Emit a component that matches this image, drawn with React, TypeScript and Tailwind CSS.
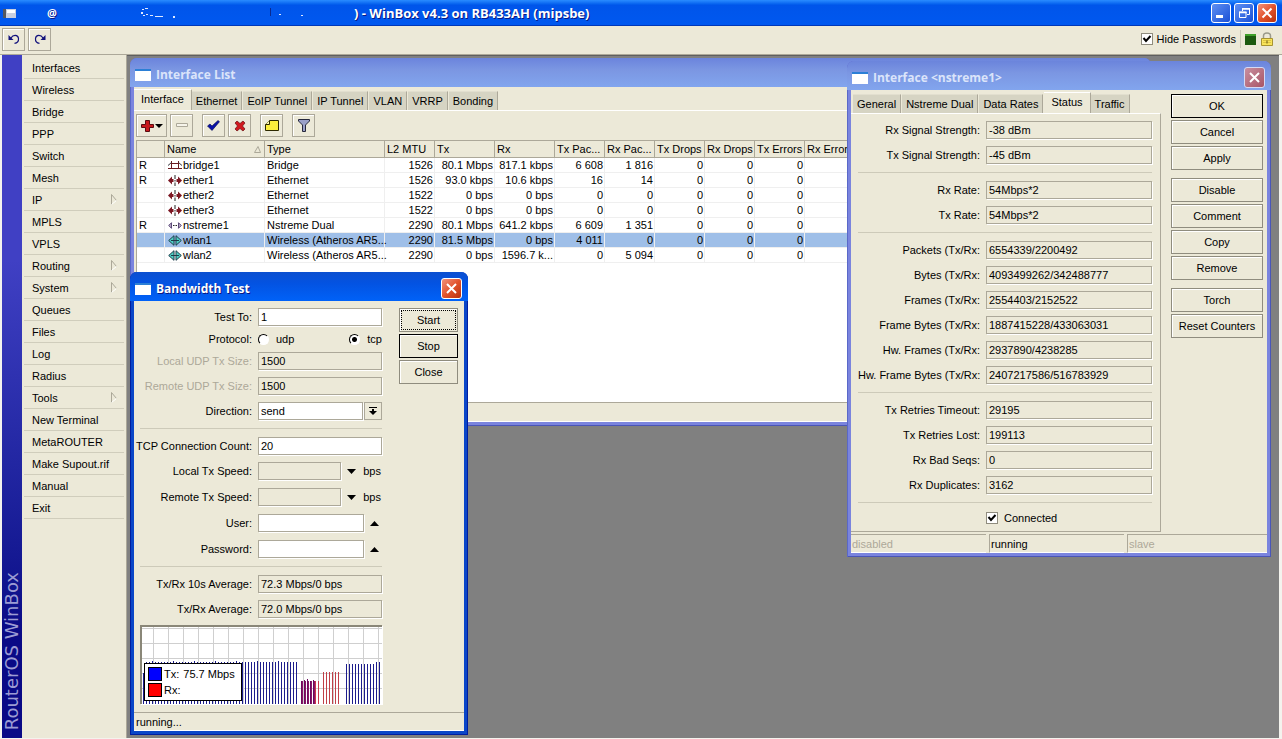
import { useState } from 'react';
import type { ReactNode } from 'react';

const menuItems = [
  { label: 'Interfaces' },
  { label: 'Wireless' },
  { label: 'Bridge' },
  { label: 'PPP' },
  { label: 'Switch' },
  { label: 'Mesh' },
  { label: 'IP', sub: true },
  { label: 'MPLS' },
  { label: 'VPLS' },
  { label: 'Routing', sub: true },
  { label: 'System', sub: true },
  { label: 'Queues' },
  { label: 'Files' },
  { label: 'Log' },
  { label: 'Radius' },
  { label: 'Tools', sub: true },
  { label: 'New Terminal' },
  { label: 'MetaROUTER' },
  { label: 'Make Supout.rif' },
  { label: 'Manual' },
  { label: 'Exit' },
];

const columns = [
  { label: '', width: 'w-[28px]' },
  { label: 'Name', width: 'w-[100px]', sorted: true },
  { label: 'Type', width: 'w-[120px]' },
  { label: 'L2 MTU', width: 'w-[50px]' },
  { label: 'Tx', width: 'w-[60px]' },
  { label: 'Rx', width: 'w-[60px]' },
  { label: 'Tx Pac...', width: 'w-[50px]' },
  { label: 'Rx Pac...', width: 'w-[50px]' },
  { label: 'Tx Drops', width: 'w-[50px]' },
  { label: 'Rx Drops', width: 'w-[50px]' },
  { label: 'Tx Errors', width: 'w-[50px]' },
  { label: 'Rx Errors', width: 'w-[50px]' },
];

const interfaces = [
  { flag: 'R', name: 'bridge1', kind: 'bridge', type: 'Bridge', values: ['1526', '80.1 Mbps', '817.1 kbps', '6 608', '1 816', '0', '0', '0', '0'] },
  { flag: 'R', name: 'ether1', kind: 'ether', type: 'Ethernet', values: ['1526', '93.0 kbps', '10.6 kbps', '16', '14', '0', '0', '0', '0'] },
  { flag: '', name: 'ether2', kind: 'ether', type: 'Ethernet', values: ['1522', '0 bps', '0 bps', '0', '0', '0', '0', '0', '0'] },
  { flag: '', name: 'ether3', kind: 'ether', type: 'Ethernet', values: ['1522', '0 bps', '0 bps', '0', '0', '0', '0', '0', '0'] },
  { flag: 'R', name: 'nstreme1', kind: 'nstreme', type: 'Nstreme Dual', values: ['2290', '80.1 Mbps', '641.2 kbps', '6 609', '1 351', '0', '0', '0', '0'] },
  { flag: '', name: 'wlan1', kind: 'wlan', type: 'Wireless (Atheros AR5...', values: ['2290', '81.5 Mbps', '0 bps', '4 011', '0', '0', '0', '0', '0'] },
  { flag: '', name: 'wlan2', kind: 'wlan', type: 'Wireless (Atheros AR5...', values: ['2290', '0 bps', '1596.7 k...', '0', '5 094', '0', '0', '0', '0'] },
];

const statusGroups = [
  [
    ['Rx Signal Strength:', '-38 dBm'],
    ['Tx Signal Strength:', '-45 dBm'],
  ],
  [
    ['Rx Rate:', '54Mbps*2'],
    ['Tx Rate:', '54Mbps*2'],
  ],
  [
    ['Packets (Tx/Rx:', '6554339/2200492'],
    ['Bytes (Tx/Rx:', '4093499262/342488777'],
    ['Frames (Tx/Rx:', '2554403/2152522'],
    ['Frame Bytes (Tx/Rx:', '1887415228/433063031'],
    ['Hw. Frames (Tx/Rx:', '2937890/4238285'],
    ['Hw. Frame Bytes (Tx/Rx:', '2407217586/516783929'],
  ],
  [
    ['Tx Retries Timeout:', '29195'],
    ['Tx Retries Lost:', '199113'],
    ['Rx Bad Seqs:', '0'],
    ['Rx Duplicates:', '3162'],
  ],
];

const buttonGroups = [
  ['OK', 'Cancel', 'Apply'],
  ['Disable', 'Comment', 'Copy', 'Remove'],
  ['Torch', 'Reset Counters'],
];

function KindIcon({ kind }: { kind: string }) {
  if (kind === 'bridge') {
    return (
      <svg width="14" height="11" viewBox="0 0 14 11" fill="none" stroke="#6b1a20">
        <path d="M0 8.500h14M3.500 1v8M10.500 1v8M3.500 3.500h7" />
        <path d="M0 5.500 3.500 2.500M14 5.500 10.500 2.500" stroke="#33333a" />
      </svg>
    );
  }
  if (kind === 'ether') {
    return (
      <svg width="14" height="11" viewBox="0 0 14 11">
        <path d="M0 5.500 4 1.500v8zM14 5.500l-4-4v8z" fill="#7c1622" />
        <path d="M4 4h1.500v3H4zM8.500 4H10v3H8.500z" fill="#7c1622" />
        <path d="M7 0v4M7 5v1.500M7 7.500V11" stroke="#222" />
      </svg>
    );
  }
  if (kind === 'nstreme') {
    return (
      <svg width="14" height="11" viewBox="0 0 14 11">
        <path d="M.7 5.500 3.500 2.700v5.600zM13.300 5.500l-2.800-2.800v5.600z" fill="#b9a8c6" stroke="#5b4a78" />
        <path d="M5 5.500h1.500M7.500 5.500H9" stroke="#222" />
      </svg>
    );
  }
  return (
    <svg width="14" height="11" viewBox="0 0 14 11">
      <path d="M.7 5.500 6 .7v9.600zM13.300 5.500 8 .7v9.600z" fill="#4fd0c4" stroke="#1d3c4a" />
      <path d="M3 5.500h8" stroke="#1d3c4a" />
    </svg>
  );
}

function CloseButton({ active }: { active?: boolean }) {
  return (
    <button
      type="button"
      aria-label="Close"
      className={
        active
          ? 'flex size-[21px] items-center justify-center rounded-[3px] border border-white bg-linear-to-br from-[#f0917a] via-[#e2532b] to-[#b8300c]'
          : 'flex size-[21px] items-center justify-center rounded-[3px] border border-[#d5daf5] bg-linear-to-br from-[#c88fa0] to-[#a85566]'
      }
    >
      <svg width="13" height="13" viewBox="0 0 13 13" stroke="#fff" strokeWidth="2">
        <path d="M2 2l9 9M11 2l-9 9" />
      </svg>
    </button>
  );
}

function Window({ title, active, closable, className, children }: {
  title: string;
  active?: boolean;
  closable?: boolean;
  className: string;
  children: ReactNode;
}) {
  return (
    <section
      className={`absolute flex flex-col rounded-t-[7px] px-1 pb-1 ${
        active
          ? 'bg-[#0a46c8] shadow-[inset_1px_0_0_#001ea0,inset_-1px_-1px_0_#001ea0]'
          : 'bg-[#7a84de] shadow-[inset_1px_0_0_#5a68c8,inset_-1px_-1px_0_#4a55b8]'
      } ${className}`}
    >
      <header
        className={`-mx-1 flex h-[29px] shrink-0 items-center rounded-t-[7px] pt-[4px] pr-[6px] pl-[5px] font-['Open_Sans',sans-serif] text-[12px] font-bold ${
          active
            ? 'bg-linear-to-b from-[#0b4fd0] via-[#0353e2] via-40% to-[#0062f8] text-white [text-shadow:1px_1px_0_#0a1883]'
            : 'bg-linear-to-b from-[#6b84dc] via-[#7b96e2] via-40% to-[#82a5ee] text-[#dbe4fa]'
        }`}
      >
        <span className="mr-[5px] h-[12px] w-[16px] border-t-2 border-[#2b7fd6] bg-white" />
        <h2 className="flex-1">{title}</h2>
        {closable && <CloseButton active={active} />}
      </header>
      <div className="flex flex-1 flex-col bg-[#ece9d8]">{children}</div>
    </section>
  );
}

function Tabs({ tabs, current }: { tabs: string[]; current: string }) {
  return (
    <div role="tablist" className="flex h-[21px] items-end">
      {tabs.map((tab) => (
        <button
          key={tab}
          type="button"
          role="tab"
          aria-selected={tab === current}
          className={
            tab === current
              ? 'h-[21px] border-t border-r border-t-white border-r-[#aca899] px-[7px] pb-[2px]'
              : 'mr-px h-[19px] border-t border-r border-t-[#e2dfcf] border-r-[#aca899] bg-[#d6d4c3] px-1'
          }
        >
          {tab}
        </button>
      ))}
    </div>
  );
}

function ToolButton({ label, wide, children }: { label: string; wide?: boolean; children: ReactNode }) {
  return (
    <button
      type="button"
      aria-label={label}
      className={`flex h-[23px] items-center justify-center border border-[#aca899] shadow-[inset_1px_1px_0_#fff] ${wide ? 'w-[31px]' : 'w-[23px]'}`}
    >
      {children}
    </button>
  );
}

function PushButton({ children, primary, focused }: { children: ReactNode; primary?: boolean; focused?: boolean }) {
  return (
    <button
      type="button"
      className={`flex h-[24px] items-center justify-center border p-px shadow-[inset_1px_1px_0_#fff] ${primary ? 'border-black' : 'border-[#8f8c7e]'}`}
    >
      <span className={`flex size-full items-center justify-center ${focused ? 'border border-dotted border-black' : ''}`}>
        {children}
      </span>
    </button>
  );
}

function Check({ id, checked, onChange }: { id: string; checked: boolean; onChange?: () => void }) {
  return (
    <span className="relative size-[12px]">
      <input
        id={id}
        type="checkbox"
        checked={checked}
        readOnly={!onChange}
        onChange={onChange}
        className="block size-[12px] appearance-none border border-[#8f8c7e] bg-white"
      />
      {checked && (
        <svg className="pointer-events-none absolute inset-0" width="12" height="12" viewBox="0 0 12 12" fill="none" stroke="#000" strokeWidth="2">
          <path d="M2.500 5l2.500 3 4.500-5" />
        </svg>
      )}
    </span>
  );
}

const fieldBase = 'h-[18px] min-w-0 border border-[#aca899] px-[2px] shadow-[1px_1px_0_#fff] outline-none';

function Row({ id, label, dim, children }: { id?: string; label: string; dim?: boolean; children: ReactNode }) {
  return (
    <div className="flex items-center gap-[6px]">
      <label htmlFor={id} className={`w-[116px] shrink-0 text-right whitespace-nowrap ${dim ? 'text-[#aca899]' : ''}`}>
        {label}
      </label>
      {children}
    </div>
  );
}

function Separator({ inset }: { inset?: boolean }) {
  return <div className={`my-px h-px border-t border-[#cdcab9] ${inset ? 'ml-1' : ''}`} />;
}

function Triangle({ up }: { up?: boolean }) {
  return (
    <svg width="9" height="5" viewBox="0 0 9 5">
      <path d={up ? 'M0 5 4.500 0 9 5z' : 'M0 0h9L4.500 5z'} fill="#000" />
    </svg>
  );
}

function InterfaceList() {
  return (
    <Window title="Interface List" className="top-[3px] left-[3px] h-[368px] w-[1021px]">
      <div className="mt-[2px] border-b border-white">
        <Tabs tabs={['Interface', 'Ethernet', 'EoIP Tunnel', 'IP Tunnel', 'VLAN', 'VRRP', 'Bonding']} current="Interface" />
      </div>
      <div className="flex gap-[3px] px-[2px] py-[3px]">
        <ToolButton label="Add" wide>
          <svg width="22" height="12" viewBox="0 0 22 12">
            <path d="M4.500.500h4v4h4v3h-4v4h-4v-4h-4v-3h4z" fill="#c8181c" stroke="#5a0c10" />
            <path d="M14 4h8l-4 4z" fill="#000" />
          </svg>
        </ToolButton>
        <ToolButton label="Remove">
          <svg width="12" height="5" viewBox="0 0 12 5">
            <path d="M.5.500h11v3H.5z" fill="#f6f4ea" stroke="#aca899" />
          </svg>
        </ToolButton>
        <span className="w-[3px]" />
        <ToolButton label="Enable">
          <svg width="13" height="11" viewBox="0 0 13 11">
            <path d="M.5 6 3 4l2 2L11 .500l1.500 1.200L5 10.500z" fill="#0a12a8" stroke="#04084c" strokeWidth=".6" />
          </svg>
        </ToolButton>
        <ToolButton label="Disable">
          <svg width="12" height="12" viewBox="0 0 12 12">
            <path d="M1 3 3 1l3 2.500L9 1l2 2-2.500 3L11 9l-2 2-3-2.500L3 11 1 9l2.500-3z" fill="#d01a1e" stroke="#6a0c10" strokeWidth=".7" />
          </svg>
        </ToolButton>
        <span className="w-[3px]" />
        <ToolButton label="Comment">
          <svg width="14" height="11" viewBox="0 0 14 11">
            <path d="M4.500.500h9v10H.5v-6z" fill="#fcee3c" stroke="#2c2800" />
            <path d="M.5 4.500h4v-4" fill="#fffbb0" stroke="#2c2800" />
          </svg>
        </ToolButton>
        <span className="w-[3px]" />
        <ToolButton label="Filter">
          <svg width="12" height="13" viewBox="0 0 12 13">
            <path d="M.5.500h11v1.500L7.500 6v6.500h-3V6L.5 2z" fill="#9aa0c8" stroke="#26283c" />
          </svg>
        </ToolButton>
      </div>
      <div className="ml-[2px] flex-1 overflow-hidden border-t border-l border-[#aca899] bg-white">
        <table className="w-full table-fixed border-separate border-spacing-0">
          <thead>
            <tr>
              {columns.map((c) => (
                <th key={c.label} className={`h-[17px] border-r border-b border-[#aca899] bg-[#ece9d8] p-0 pl-[2px] text-left font-normal whitespace-nowrap ${c.width}`}>
                  <span className="flex items-center justify-between pr-[3px]">
                    {c.label}
                    {c.sorted && (
                      <svg width="7" height="7" viewBox="0 0 7 7" fill="none" stroke="#aca899">
                        <path d="M.5 6.500 4 .500l2.500 6z" />
                      </svg>
                    )}
                  </span>
                </th>
              ))}
              <th className="border-b border-[#aca899] bg-[#ece9d8]" />
            </tr>
          </thead>
          <tbody>
            {interfaces.map((row) => (
              <tr key={row.name} className={row.name === 'wlan1' ? 'bg-[#9fbfe8]' : ''}>
                <td className="h-[15px] border-r border-b border-[#efefef] p-0 pl-[2px] leading-[14px]">{row.flag}</td>
                <td className="border-r border-b border-[#efefef] p-0 pl-[3px] leading-[14px]">
                  <span className="flex items-center gap-px">
                    <KindIcon kind={row.kind} />
                    {row.name}
                  </span>
                </td>
                <td className="border-r border-b border-[#efefef] p-0 pl-[2px] leading-[14px] whitespace-nowrap">{row.type}</td>
                {row.values.map((v, i) => (
                  <td key={i} className="border-r border-b border-[#efefef] p-0 pr-px text-right leading-[14px] whitespace-nowrap">{v}</td>
                ))}
                <td className="border-b border-[#efefef]" />
              </tr>
            ))}
          </tbody>
        </table>
      </div>
      <div className="h-[20px] border-t border-b border-t-[#aca899] border-b-white" />
    </Window>
  );
}

// bar tops and colours for the traffic graph, one bar per sample
const samples = [
  ...Array.from({ length: 52 }, (_, i) => ({ x: 2 + i * 3, top: i === 0 ? 46 : i % 7 === 3 ? 34 : 35, color: '#1c1c8c' })),
  ...Array.from({ length: 5 }, (_, i) => ({ x: 160 + i * 3, top: 54 - (i % 3), color: '#6a0a5c' })),
  ...Array.from({ length: 2 }, (_, i) => ({ x: 174 + i * 3, top: 54, color: '#c83a4a' })),
  ...Array.from({ length: 6 }, (_, i) => ({ x: 182 + i * 3, top: 45, color: '#c04048' })),
  ...Array.from({ length: 12 }, (_, i) => ({ x: 205 + i * 3, top: i > 9 ? 35 : 37, color: '#1c1c8c' })),
];

function TrafficGraph() {
  return (
    <div className="relative ml-1 border-t-2 border-l-2 border-[#8a8778] bg-white shadow-[1px_1px_0_#fff]">
      <svg className="block w-full" height="77" viewBox="0 0 240 77" preserveAspectRatio="none" shapeRendering="crispEdges">
        {Array.from({ length: 16 }, (_, i) => (
          <path key={i} d={`M${11.5 + i * 15} 0v77`} stroke="#cfcfcf" />
        ))}
        {[1.5, 16.5, 31.5, 46.5, 61.5].map((y) => (
          <path key={y} d={`M0 ${y}h240`} stroke="#cfcfcf" />
        ))}
        {samples.map((s) => (
          <path key={s.x} d={`M${s.x - 0.5} ${s.top}V77`} stroke={s.color} />
        ))}
        {Array.from({ length: 5 }, (_, i) => (
          <path key={i} d={`M${160.5 + i * 3} 54V77`} stroke="#8c1468" />
        ))}
      </svg>
      <div className="absolute bottom-[3px] left-[2px] flex w-[98px] flex-col gap-[2px] border border-black bg-white p-[3px]">
        <span className="flex h-[14px] items-center gap-[2px]">
          <span className="size-[14px] border border-black bg-[#0000ff]" />
          <span>Tx:</span>
          <span className="ml-[2px]">75.7 Mbps</span>
        </span>
        <span className="flex h-[14px] items-center gap-[2px]">
          <span className="size-[14px] border border-black bg-[#ff0000]" />
          <span>Rx:</span>
        </span>
      </div>
    </div>
  );
}

function BandwidthTest() {
  const [protocol, setProtocol] = useState('tcp');
  const radio =
    'size-[11px] appearance-none rounded-full border border-t-black border-l-black border-r-white border-b-white bg-white checked:bg-[radial-gradient(circle,#000_2px,#fff_3px)]';

  return (
    <Window title="Bandwidth Test" active closable className="top-[217px] left-[3px] w-[338px]">
      <div className="mt-[2px] flex items-start pt-[5px] pr-[6px] pl-[2px]">
        <div className="flex w-[246px] flex-col gap-[7px]">
          <Row id="test-to" label="Test To:">
            <input id="test-to" defaultValue="1" className={`${fieldBase} flex-1 bg-white`} />
          </Row>
          <div role="radiogroup" aria-label="Protocol" className="flex h-[12px] items-center">
            <span className="mr-[6px] w-[116px] text-right">Protocol:</span>
            <input id="udp" type="radio" name="protocol" className={radio} checked={protocol === 'udp'} onChange={() => setProtocol('udp')} />
            <label htmlFor="udp" className="mr-auto ml-[7px]">udp</label>
            <input id="tcp" type="radio" name="protocol" className={radio} checked={protocol === 'tcp'} onChange={() => setProtocol('tcp')} />
            <label htmlFor="tcp" className="ml-[7px]">tcp</label>
          </div>
          <Row id="local-udp" label="Local UDP Tx Size:" dim>
            <input id="local-udp" readOnly value="1500" className={`${fieldBase} flex-1`} />
          </Row>
          <Row id="remote-udp" label="Remote UDP Tx Size:" dim>
            <input id="remote-udp" readOnly value="1500" className={`${fieldBase} flex-1`} />
          </Row>
          <Row id="direction" label="Direction:">
            <div className="flex flex-1 gap-px">
              <select id="direction" defaultValue="send" className={`${fieldBase} flex-1 appearance-none bg-white`}>
                <option>send</option>
                <option>receive</option>
                <option>both</option>
              </select>
              <button type="button" aria-label="Open direction list" className="flex h-[18px] w-[18px] items-center justify-center border border-[#aca899]">
                <svg width="8" height="8" viewBox="0 0 8 8">
                  <path d="M0 0h8v1H0zM3 2h2v2h3L4 8 0 4h3z" fill="#000" />
                </svg>
              </button>
            </div>
          </Row>
          <Separator inset />
          <Row id="tcp-count" label="TCP Connection Count:">
            <input id="tcp-count" defaultValue="20" className={`${fieldBase} flex-1 bg-white`} />
          </Row>
          <div className="flex flex-col gap-2">
            <Row id="local-speed" label="Local Tx Speed:">
              <input id="local-speed" readOnly className={`${fieldBase} w-[83px]`} />
              <span className="flex flex-1 items-center justify-between pr-px">
                <Triangle />
                bps
              </span>
            </Row>
            <Row id="remote-speed" label="Remote Tx Speed:">
              <input id="remote-speed" readOnly className={`${fieldBase} w-[83px]`} />
              <span className="flex flex-1 items-center justify-between pr-px">
                <Triangle />
                bps
              </span>
            </Row>
            <Row id="user" label="User:">
              <input id="user" className={`${fieldBase} w-[106px] bg-white`} />
              <Triangle up />
            </Row>
            <Row id="password" label="Password:">
              <input id="password" type="password" className={`${fieldBase} w-[106px] bg-white`} />
              <Triangle up />
            </Row>
          </div>
          <Separator inset />
          <Row id="avg10" label="Tx/Rx 10s Average:">
            <input id="avg10" readOnly value="72.3 Mbps/0 bps" className={`${fieldBase} flex-1`} />
          </Row>
          <Row id="avg" label="Tx/Rx Average:">
            <input id="avg" readOnly value="72.0 Mbps/0 bps" className={`${fieldBase} flex-1`} />
          </Row>
          <TrafficGraph />
        </div>
        <div className="ml-auto flex w-[59px] flex-col gap-[2px]">
          <PushButton focused>Start</PushButton>
          <PushButton primary>Stop</PushButton>
          <PushButton>Close</PushButton>
        </div>
      </div>
      <footer className="mt-2 flex h-[19px] items-center border-t border-b border-t-[#aca899] border-b-white pl-[2px]">running...</footer>
    </Window>
  );
}

function NstremeStatus() {
  return (
    <Window title="Interface <nstreme1>" closable className="top-[6px] left-[720px] w-[424px]">
      <div className="flex items-start">
        <div className="mt-[2px] w-[310px]">
          <div className="pl-[2px]">
            <Tabs tabs={['General', 'Nstreme Dual', 'Data Rates', 'Status', 'Traffic']} current="Status" />
          </div>
          <div className="flex flex-col gap-[7px] border-t border-r border-b border-t-white border-r-[#aca899] border-b-[#aca899] pt-[7px] pr-2 pb-[6px] pl-[7px]">
            {statusGroups.map((group) => (
              <div key={group[0][0]} className="flex flex-col gap-[7px]">
                {group.map(([label, value]) => (
                  <div key={label} className="flex items-center gap-[6px]">
                    <label htmlFor={label} className="w-[122px] shrink-0 text-right whitespace-nowrap">{label}</label>
                    <input id={label} readOnly value={value} className={`${fieldBase} flex-1`} />
                  </div>
                ))}
                <Separator />
              </div>
            ))}
            <div className="flex h-[14px] items-center gap-[6px] pl-[128px]">
              <Check id="connected" checked />
              <label htmlFor="connected">Connected</label>
            </div>
          </div>
        </div>
        <div className="mt-1 mr-1 ml-auto flex w-[92px] flex-col gap-2">
          {buttonGroups.map((group) => (
            <div key={group[0]} className="flex flex-col gap-[2px]">
              {group.map((name) => (
                <PushButton key={name} primary={name === 'OK'}>{name}</PushButton>
              ))}
            </div>
          ))}
        </div>
      </div>
      <footer className="mt-[2px] flex h-[19px] gap-[3px] text-[#aca899]">
        <span className="flex w-[135px] items-center border-t border-b border-t-[#aca899] border-b-white pl-px">disabled</span>
        <span className="flex w-[135px] items-center border-t border-b border-l border-t-[#aca899] border-b-white border-l-[#aca899] pl-px text-black">running</span>
        <span className="flex flex-1 items-center border-t border-b border-l border-t-[#aca899] border-b-white border-l-[#aca899] pl-px">slave</span>
      </footer>
    </Window>
  );
}

export default function App() {
  const [hidePasswords, setHidePasswords] = useState(true);
  const caption = 'flex size-[20px] items-center justify-center rounded-[3px] border border-white';

  return (
    <div className="flex h-screen flex-col overflow-hidden bg-[#f4f3ee] pb-px font-['Liberation_Sans',Arial,sans-serif] text-[11px] leading-[14px] text-black">
      <header className="flex h-[26px] shrink-0 items-center bg-linear-to-b from-[#2a8cff] via-[#0055ea] via-20% to-[#0058f0] pr-[5px] pl-[3px] text-white shadow-[inset_0_-1px_0_#0038b8]">
        <svg width="14" height="11" viewBox="0 0 14 11">
          <path d="M0 1h13v9H0z" fill="#c9cfdf" />
          <path d="M0 1h3v9H0z" fill="#55585f" />
          <path d="M4 2h8v3H4z" fill="#fff" />
        </svg>
        <h1 className="flex flex-1 items-center font-['Open_Sans',sans-serif] text-[13px] font-bold whitespace-nowrap [text-shadow:1px_1px_0_#0a1883]">
          <span className="ml-[30px] w-[94px] text-[11px]">@</span>
          <span className="w-[213px]">
            <svg width="200" height="14" viewBox="0 0 200 14" fill="#dfe9ff">
              <path d="M1 3h2v1H1zM4 2h3v1H4zM0 6h2v2H0zM2 9h2v1H2zM5 8h2v1H5zM9 9h3v1H9zM14 10h8v1h-8zM32 10h2v2h-2zM138 8h2v1h-2zM160 9h2v1h-2z" />
              <path d="M129 2h1v8h-1z" fill="#0a2a90" />
            </svg>
          </span>
          <span>) - WinBox v4.3 on RB433AH (mipsbe)</span>
        </h1>
        <div className="flex gap-[3px]">
          <button type="button" aria-label="Minimize" className={`${caption} bg-linear-to-br from-[#5f8ff2] to-[#1a4fd6]`}>
            <svg width="12" height="12" viewBox="0 0 12 12"><path d="M1 8h7v3H1z" fill="#fff" /></svg>
          </button>
          <button type="button" aria-label="Restore" className={`${caption} bg-linear-to-br from-[#5f8ff2] to-[#1a4fd6]`}>
            <svg width="12" height="12" viewBox="0 0 12 12" fill="none" stroke="#fff">
              <path d="M4 1.500h7.500M4.500 1v3M11.500 1v6.500H9M1 5h7.500M1.500 5v5.500h6.500V5" />
              <path d="M1 5.500h7.500M4 2h7.500" strokeWidth="1.500" />
            </svg>
          </button>
          <button type="button" aria-label="Close" className={`${caption} bg-linear-to-br from-[#f0917a] via-[#e2532b] to-[#b8300c]`}>
            <svg width="12" height="12" viewBox="0 0 12 12" stroke="#fff" strokeWidth="2"><path d="M1.500 1.500l9 9M10.500 1.500l-9 9" /></svg>
          </button>
        </div>
      </header>

      <div className="flex h-[29px] shrink-0 items-center gap-[3px] border-b border-[#aca899] bg-[#ece9d8] pr-2 pb-[2px] pl-[2px]">
        <ToolButton label="Undo">
          <svg width="12" height="10" viewBox="0 0 12 10" fill="none" stroke="#12127c">
            <path d="M3 4C5 .500 10 .500 10.500 4.500 10.700 7 9 9 6.500 9.300" strokeWidth="1.200" />
            <path d="M.5 1v5h5z" fill="#12127c" stroke="none" />
          </svg>
        </ToolButton>
        <ToolButton label="Redo">
          <svg width="12" height="10" viewBox="0 0 12 10" fill="none" stroke="#12127c">
            <path d="M9 4C7 .500 2 .500 1.500 4.500 1.300 7 3 9 5.500 9.300" strokeWidth="1.200" />
            <path d="M11.500 1v5h-5z" fill="#12127c" stroke="none" />
          </svg>
        </ToolButton>
        <div className="ml-auto flex items-center gap-1">
          <Check id="hide-passwords" checked={hidePasswords} onChange={() => setHidePasswords(!hidePasswords)} />
          <label htmlFor="hide-passwords">Hide Passwords</label>
          <span className="h-[18px] w-px bg-[#cdcab9]" />
          <span className="size-[11px] border-t-2 border-[#3fa02a] bg-[#1c5a10]" />
          <svg width="14" height="14" viewBox="0 0 14 14">
            <path d="M3.500 7V4a3.500 3 0 0 1 7 0v3" fill="none" stroke="#9a9a8a" strokeWidth="1.500" />
            <path d="M1.500 6.500h11v7h-11z" fill="#f8e45a" stroke="#a89432" />
            <path d="M3 8.500h8M3 10.500h8" stroke="#dcc444" />
            <path d="M6.500 8.500h1v3h-1z" fill="#6a5a14" />
          </svg>
        </div>
      </div>

      <div className="flex min-h-0 flex-1 pr-[3px] pl-[2px]">
        <div className="flex w-[20px] shrink-0 items-end justify-center bg-linear-to-b from-[#4040c4] from-30% to-[#0a0a86] to-85% pb-2">
          <span className="rotate-180 font-['DejaVu_Sans',sans-serif] text-[18px] leading-[20px] whitespace-nowrap text-[#9c9cd4] [writing-mode:vertical-rl]">
            RouterOS WinBox
          </span>
        </div>
        <nav className="flex w-[105px] shrink-0 flex-col border-r border-[#aca899] bg-[#ece9d8] px-[2px] pt-[2px]">
          {menuItems.map((item) => (
            <button
              key={item.label}
              type="button"
              className="flex h-[22px] items-center justify-between border-b border-[#d0cdbc] pr-[7px] pl-2 text-left"
            >
              {item.label}
              {item.sub && (
                <svg width="6" height="11" viewBox="0 0 6 11" fill="none">
                  <path d="M.5 10.500V.500l5 6" stroke="#aca899" />
                  <path d="M5.500 6.500l-5 4" stroke="#fff" />
                </svg>
              )}
            </button>
          ))}
        </nav>
        <main className="relative flex-1 overflow-hidden bg-[#808080] shadow-[inset_0_1px_0_#5f5f5f]">
          <InterfaceList />
          <BandwidthTest />
          <NstremeStatus />
        </main>
      </div>
    </div>
  );
}
